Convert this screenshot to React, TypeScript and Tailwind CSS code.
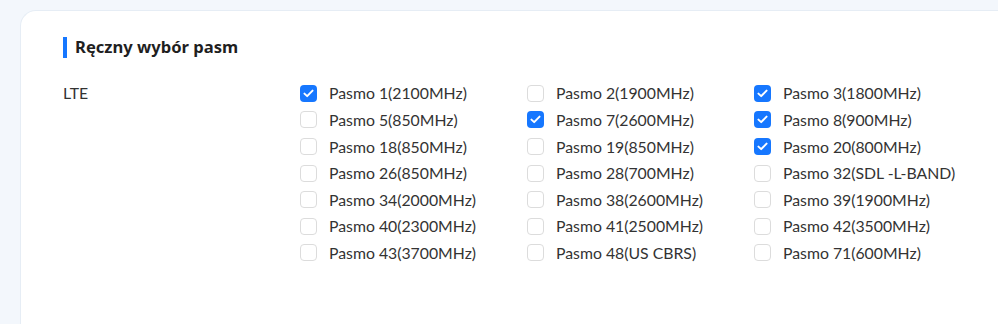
import React from "react";

type Band = { label: string; checked?: boolean };

const bands: Band[] = [
  { label: "Pasmo 1(2100MHz)", checked: true },
  { label: "Pasmo 2(1900MHz)" },
  { label: "Pasmo 3(1800MHz)", checked: true },
  { label: "Pasmo 5(850MHz)" },
  { label: "Pasmo 7(2600MHz)", checked: true },
  { label: "Pasmo 8(900MHz)", checked: true },
  { label: "Pasmo 18(850MHz)" },
  { label: "Pasmo 19(850MHz)" },
  { label: "Pasmo 20(800MHz)", checked: true },
  { label: "Pasmo 26(850MHz)" },
  { label: "Pasmo 28(700MHz)" },
  { label: "Pasmo 32(SDL -L-BAND)" },
  { label: "Pasmo 34(2000MHz)" },
  { label: "Pasmo 38(2600MHz)" },
  { label: "Pasmo 39(1900MHz)" },
  { label: "Pasmo 40(2300MHz)" },
  { label: "Pasmo 41(2500MHz)" },
  { label: "Pasmo 42(3500MHz)" },
  { label: "Pasmo 43(3700MHz)" },
  { label: "Pasmo 48(US CBRS)" },
  { label: "Pasmo 71(600MHz)" },
];

function Check({ checked }: { checked?: boolean }) {
  return checked ? (
    <span className="flex h-[17px] w-[17px] shrink-0 items-center justify-center rounded-[4px] bg-[#1677ff]">
      <svg width="11" height="9" viewBox="0 0 10 8" fill="none">
        <path d="M1.3 4.1 3.8 6.4 8.7 1.4" stroke="white" strokeWidth="1.8" strokeLinecap="round" strokeLinejoin="round" />
      </svg>
    </span>
  ) : (
    <span className="h-[17px] w-[17px] shrink-0 rounded-[4px] border border-[#dcdcdc] bg-white" />
  );
}

export default function App() {
  return (
    <div className="h-[324px] w-[998px] overflow-hidden bg-[#f3f7fc] pl-5 pt-[10px] font-['Segoe_UI','Noto_Sans',sans-serif] text-[#262626]">
      <div className="h-[340px] rounded-tl-[16px] border-t border-l border-[#e6edf5] bg-white pl-[42px] pt-[25px]">
        <div className="flex items-center">
          <span className="h-[21px] w-[4px] bg-[#1677ff]" />
          <h2 className="ml-[8px] text-[16.6px] font-bold leading-[22px] text-[#1f1f1f]">Ręczny wybór pasm</h2>
        </div>

        <div className="mt-[22px] flex font-['Lato',sans-serif] text-[15.8px] text-[#333]">
          <div className="w-[237px] leading-[26.6px]">LTE</div>
          <div className="grid grid-cols-[227px_227px_227px]">
            {bands.map((b) => (
              <label key={b.label} className="flex h-[26.6px] items-center">
                <Check checked={b.checked} />
                <span className="ml-[12px] whitespace-nowrap">{b.label}</span>
              </label>
            ))}
          </div>
        </div>
      </div>
    </div>
  );
}
